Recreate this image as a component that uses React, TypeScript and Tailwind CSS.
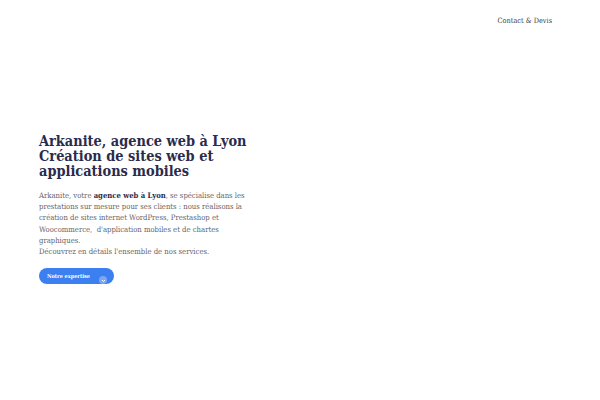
export default function App() {
  return (
    <div className="relative h-[400px] w-[600px] bg-white font-['DejaVu_Serif_Condensed','DejaVu_Serif',serif] [font-stretch:condensed]">
      <header className="flex justify-end px-[48px] pt-[15px]">
        <a className="text-[7.3px] leading-[12px] text-[#3a3a48]">Contact &amp; Devis</a>
      </header>
      <section className="pl-[39px] pt-[106px]">
        <h1 className="w-[220px] text-[14.4px] font-bold leading-[15px] text-[#2b2b4b]">
          Arkanite, agence web à Lyon
          <br />
          Création de sites web et applications mobiles
        </h1>
        <p className="mt-[12px] w-[216px] text-[7.65px] leading-[11.2px] text-[#63636b]">
          Arkanite, votre <strong className="font-bold text-[#2b2b4b]">agence web à Lyon</strong>, se spécialise dans les
          prestations sur mesure pour ses clients : nous réalisons la création de sites internet WordPress, Prestashop et
          Woocommerce,&nbsp; d'application mobiles et de chartes graphiques.
          <br />
          Découvrez en détails l'ensemble de nos services.
        </p>
        <button className="relative mt-[11px] flex h-[16px] w-[75px] items-center rounded-full bg-[#3b7ff0] pl-[8px] text-[5.5px] font-bold text-white">
          Notre expertise
          <span className="absolute left-[60px] top-[8px] flex h-[8px] w-[8px] items-center justify-center rounded-full bg-[#7aa8f7]">
            <svg width="5" height="5" viewBox="0 0 10 10" fill="none" stroke="white" strokeWidth="2">
              <path d="M2 4l3 3 3-3" />
            </svg>
          </span>
        </button>
      </section>
    </div>
  );
}
